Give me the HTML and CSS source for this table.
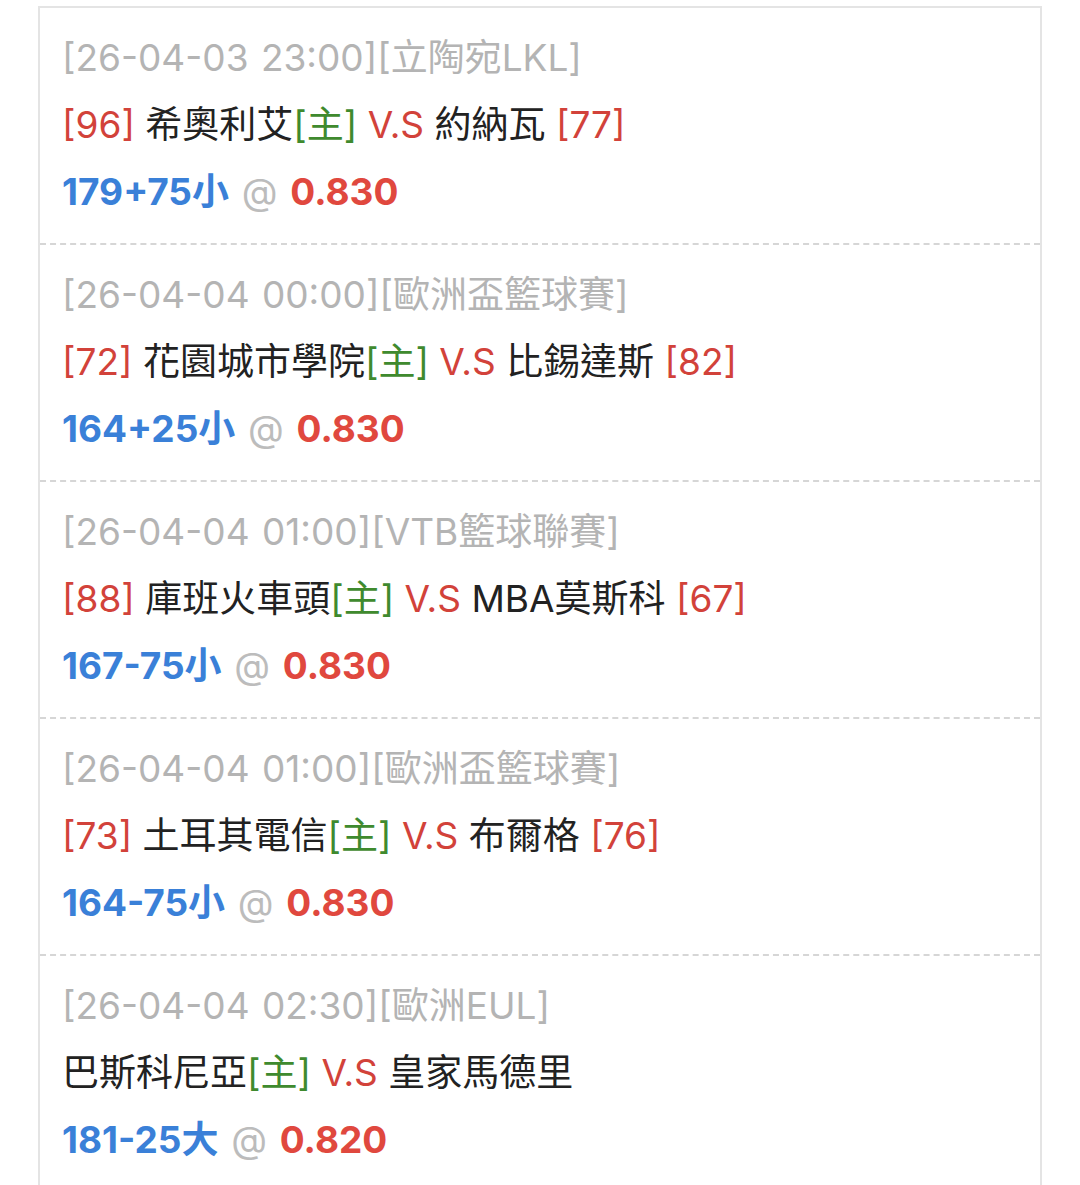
FILE: index.html
```html
<!DOCTYPE html>
<html lang="zh-Hant">
<head>
<meta charset="utf-8">
<title>賽果</title>
<link rel="stylesheet" href="styles.css">
</head>
<body>
<div class="list">
  <div class="item">
    <div class="meta">[26-04-03 23:00][立陶宛LKL]</div>
    <div class="teams"><span class="score">[96]</span> 希奧利艾<span class="home">[主]</span> <span class="vs">V.S</span> 約納瓦 <span class="score">[77]</span></div>
    <div class="odds"><span class="line">179+75小</span> <span class="at">@</span> <span class="price">0.830</span></div>
  </div>
  <div class="item">
    <div class="meta">[26-04-04 00:00][歐洲盃籃球賽]</div>
    <div class="teams"><span class="score">[72]</span> 花園城市學院<span class="home">[主]</span> <span class="vs">V.S</span> 比錫達斯 <span class="score">[82]</span></div>
    <div class="odds"><span class="line">164+25小</span> <span class="at">@</span> <span class="price">0.830</span></div>
  </div>
  <div class="item">
    <div class="meta">[26-04-04 01:00][VTB籃球聯賽]</div>
    <div class="teams"><span class="score">[88]</span> 庫班火車頭<span class="home">[主]</span> <span class="vs">V.S</span> MBA莫斯科 <span class="score">[67]</span></div>
    <div class="odds"><span class="line">167-75小</span> <span class="at">@</span> <span class="price">0.830</span></div>
  </div>
  <div class="item">
    <div class="meta">[26-04-04 01:00][歐洲盃籃球賽]</div>
    <div class="teams"><span class="score">[73]</span> 土耳其電信<span class="home">[主]</span> <span class="vs">V.S</span> 布爾格 <span class="score">[76]</span></div>
    <div class="odds"><span class="line">164-75小</span> <span class="at">@</span> <span class="price">0.830</span></div>
  </div>
  <div class="item">
    <div class="meta">[26-04-04 02:30][歐洲EUL]</div>
    <div class="teams">巴斯科尼亞<span class="home">[主]</span> <span class="vs">V.S</span> 皇家馬德里</div>
    <div class="odds"><span class="line">181-25大</span> <span class="at">@</span> <span class="price">0.820</span></div>
  </div>
</div>
</body>
</html>
```

FILE: styles.css
```css
html, body {
  margin: 0;
  padding: 0;
  background: #ffffff;
}
body {
  font-family: "Inter", "Noto Sans CJK TC", sans-serif;
  font-size: 37px;
  color: #222222;
  height: 1185px;
  overflow: hidden;
}
.list {
  margin: 6px 0 0 38px;
  width: 1000px;
  border: 2px solid #e4e4e4;
  border-bottom: none;
  min-height: 1185px;
}
.item {
  padding: 16px 22px 18px 22px;
  border-bottom: 2px dashed #d6d6d6;
}
.meta, .teams, .odds {
  line-height: 67px;
  white-space: nowrap;
}
.meta {
  color: #b4b4b4;
  word-spacing: 2px;
}
.score, .vs {
  color: #d2423a;
}
.home {
  color: #3f8a2e;
}
.odds {
  font-weight: 700;
  word-spacing: 4px;
}
.line {
  color: #3a80d8;
}
.at {
  color: #bcbcbc;
  font-weight: 400;
}
.price {
  color: #e0483e;
}
```
